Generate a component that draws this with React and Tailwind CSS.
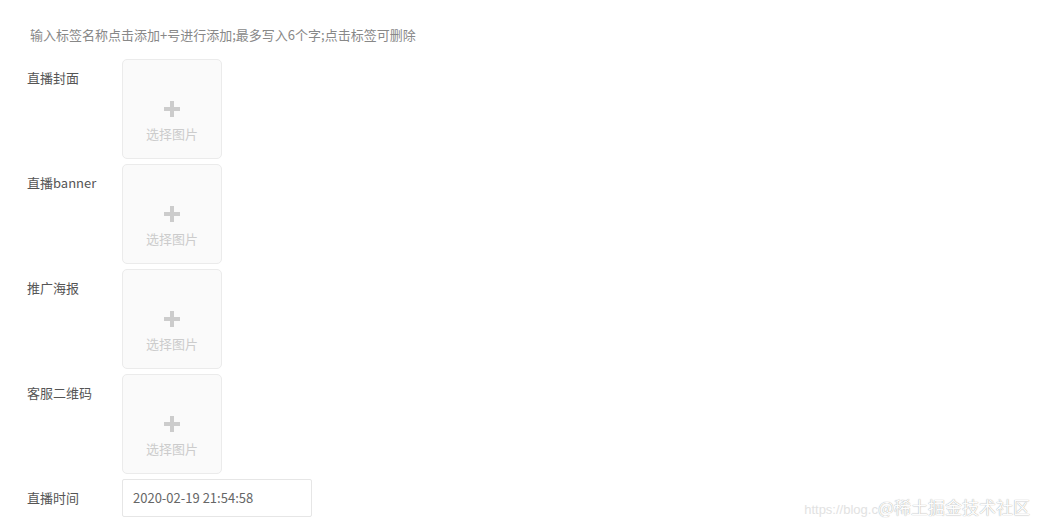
const uploads = ["直播封面", "直播banner", "推广海报", "客服二维码"];

function UploadBox() {
  return (
    <div className="w-[100px] h-[100px] bg-[#fafafa] border border-[#ebebeb] rounded-[5px] flex flex-col items-center pt-[41px]">
      <svg width="16" height="16" viewBox="0 0 16 16" className="text-[#cccccc]">
        <rect x="6" y="0" width="4" height="16" fill="currentColor" />
        <rect x="0" y="6" width="16" height="4" fill="currentColor" />
      </svg>
      <span className="text-[13px] leading-[18px] text-[#cccccc] mt-[8px]">选择图片</span>
    </div>
  )
}

export default function App() {
  return (
    <div className="relative w-[1037px] h-[525px] bg-white overflow-hidden text-[#555] font-['Noto_Sans_CJK_SC','Noto_Sans',sans-serif]">
      <div className="pl-[27px] pt-[26px]">
        <p className="pl-[3px] text-[13px] leading-[18px] text-[#888]">输入标签名称点击添加+号进行添加;最多写入6个字;点击标签可删除</p>
        <div className="flex flex-col gap-[5px] mt-[15px]">
          {uploads.map((label) => (
            <div key={label} className="flex">
              <div className="w-[95px] pt-[10px] text-[13px] leading-[18px] text-[#555]">{label}</div>
              <UploadBox />
            </div>
          ))}
          <div className="flex">
            <div className="w-[95px] pt-[10px] text-[13px] leading-[18px] text-[#555]">直播时间</div>
            <div className="w-[190px] h-[38px] border border-[#e6e6e6] rounded-[2px] flex items-center pl-[10px] text-[13px] text-[#666]">
              2020-02-19 21:54:58
            </div>
          </div>
        </div>
      </div>
      <div className="absolute right-[7px] bottom-[6px] flex items-baseline">
        <span className="text-[13px] text-[#e2e2e2] font-['Liberation_Sans',sans-serif]">https://blog.c</span>
        <span className="text-[17px] text-[#fdfdfd] [text-shadow:0_0_1px_#888]">@稀土掘金技术社区</span>
      </div>
    </div>
  )
}
